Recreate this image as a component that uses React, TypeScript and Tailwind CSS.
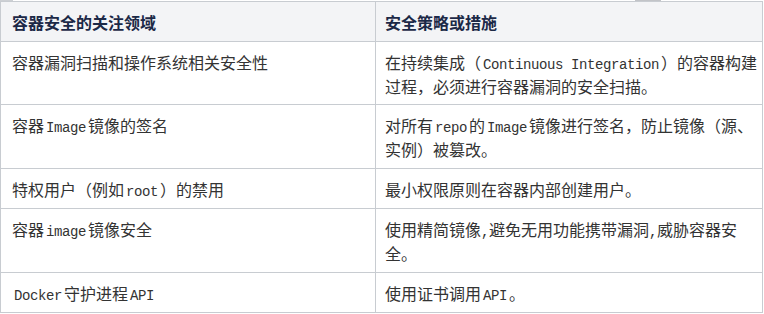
const rows = [
  {
    area: '容器漏洞扫描和操作系统相关安全性',
    measure: ['在持续集成（Continuous Integration）的容器构建', '过程，必须进行容器漏洞的安全扫描。'],
    pad: 'pb-[6px]',
  },
  {
    area: '容器Image镜像的签名',
    measure: ['对所有repo的Image镜像进行签名，防止镜像（源、', '实例）被篡改。'],
    pad: 'pb-[7px]',
  },
  {
    area: '特权用户（例如root）的禁用',
    measure: ['最小权限原则在容器内部创建用户。'],
    pad: 'pb-[7px]',
  },
  {
    area: '容器image镜像安全',
    measure: ['使用精简镜像,避免无用功能携带漏洞,威胁容器安', '全。'],
    pad: 'pb-[7px]',
  },
  {
    area: 'Docker守护进程API',
    measure: ['使用证书调用API。'],
    pad: 'pb-[7px]',
  },
]

// ascii runs get a half-width mono face, like the original page font
function Mixed({ text }: { text: string }) {
  const parts = text.split(/([ -~]+)/)
  return (
    <>
      {parts.map((p, i) =>
        i % 2 === 1 ? (
          <span
            key={i}
            className={
              "font-['Liberation_Mono',monospace] text-[14px] tracking-[-0.4px] leading-none " +
              (/[A-Za-z]/.test(p) ? 'mx-[2px]' : '')
            }
          >
            {p}
          </span>
        ) : (
          <span key={i}>{p}</span>
        )
      )}
    </>
  )
}

export default function App() {
  return (
    <div className="w-[764px] h-[314px] bg-white font-['Noto_Sans_CJK_SC',sans-serif] text-[16px] leading-6 text-[#333]">
      <div className="flex h-px">
        <div className="w-[13px] bg-[#cdd0d4]"></div>
        <div className="ml-[622px] w-[26px] bg-[#c2c4c8]"></div>
      </div>
      <div className="grid grid-cols-[375px_387px] w-[763px] border-l border-t border-[#c8ccd1]">
        <div className="bg-[#f3f4f6] border-r border-b border-[#c8ccd1] pl-[11px] pt-2 pb-[7px] font-bold text-[#1c2947]">
          容器安全的关注领域
        </div>
        <div className="bg-[#f3f4f6] border-r border-b border-[#c8ccd1] pl-[9px] pt-2 pb-[7px] font-bold text-[#1c2947]">
          安全策略或措施
        </div>
        {rows.map((row) => (
          <div key={row.area} className="contents">
            <div className={`border-r border-b border-[#c8ccd1] pl-[11px] pt-2 ${row.pad}`}>
              <div className="h-6">
                <Mixed text={row.area} />
              </div>
            </div>
            <div className={`border-r border-b border-[#c8ccd1] pl-[9px] pt-2 whitespace-nowrap ${row.pad}`}>
              {row.measure.map((line, i) => (
                <div key={i} className="h-6">
                  <Mixed text={line} />
                </div>
              ))}
            </div>
          </div>
        ))}
      </div>
    </div>
  )
}
